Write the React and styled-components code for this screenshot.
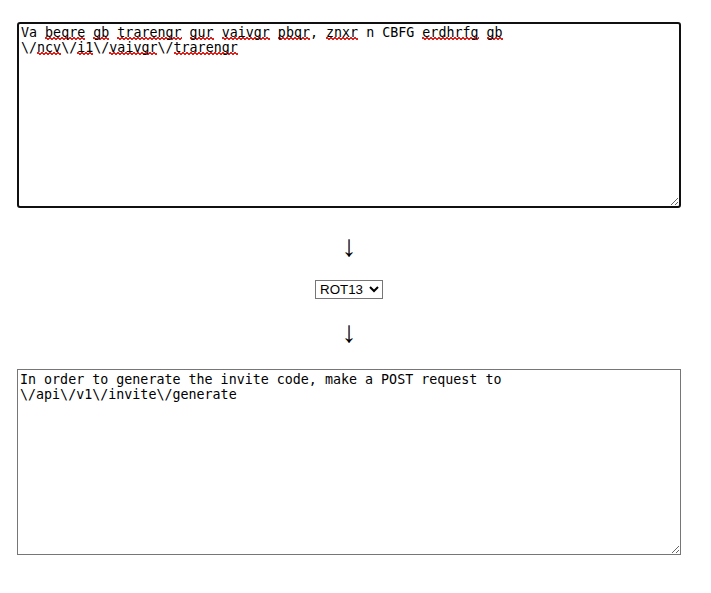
import React, { useState } from "react";
import styled, { createGlobalStyle } from "styled-components";

const GlobalStyle = createGlobalStyle`
  body {
    margin: 8px;
    background: #ffffff;
    font-family: "Liberation Serif", serif;
  }
`;

const Page = styled.div`
  padding: 14px 0 0 9px;
`;

const Column = styled.div`
  width: 664px;
  display: flex;
  flex-direction: column;
  align-items: center;
`;

// editable box standing in for the focused textarea, so spelling marks can show
const EditBox = styled.div`
  box-sizing: border-box;
  width: 664px;
  height: 186px;
  padding: 1px 2px;
  font-family: "DejaVu Sans Mono", monospace;
  font-size: 13.333px;
  line-height: normal;
  color: #000;
  background: #fff;
  white-space: pre-wrap;
  overflow-wrap: break-word;
  overflow: auto;
  resize: vertical;
  border: 2px solid #101010;
  border-radius: 3px;
  outline: none;
`;

const Misspelt = styled.span`
  background-image:
    linear-gradient(45deg, transparent 40%, #e0201b 40%, #e0201b 60%, transparent 60%),
    linear-gradient(-45deg, transparent 40%, #e0201b 40%, #e0201b 60%, transparent 60%);
  background-size: 4px 3px;
  background-repeat: repeat-x;
  background-position: 0 100%, 2px 100%;
`;

const TextBox = styled.textarea`
  box-sizing: border-box;
  width: 664px;
  height: 186px;
  padding: 2px;
  margin: 22px 0 0;
  font-family: "DejaVu Sans Mono", monospace;
  font-size: 13.333px;
  line-height: normal;
  color: #000;
  background: #fff;
  resize: vertical;
  border: 1px solid #767676;
  border-radius: 0;
  outline: none;
`;

const Arrow = styled.div`
  font-family: "Liberation Serif", serif;
  font-size: 30px;
  line-height: 30px;
  height: 30px;
  color: #000;
  margin-top: ${(p) => p.$top}px;
`;

const Picker = styled.select`
  font-family: "Liberation Sans", Arial, sans-serif;
  font-size: 13.333px;
  margin-top: 19px;
  padding: 0;
  border: 1px solid #767676;
  border-radius: 0;
  background: #fff;
  color: #000;
`;

const words = [
  ["Va ", false], ["beqre", true], [" ", false], ["gb", true], [" ", false],
  ["trarengr", true], [" ", false], ["gur", true], [" ", false], ["vaivgr", true],
  [" ", false], ["pbqr", true], [", ", false], ["znxr", true], [" n CBFG ", false],
  ["erdhrfg", true], [" ", false], ["gb", true], [" \\/", false], ["ncv", true],
  ["\\/", false], ["i1", true], ["\\/", false], ["vaivgr", true], ["\\/", false],
  ["trarengr", true],
];

const output =
  "In order to generate the invite code, make a POST request to \\/api\\/v1\\/invite\\/generate";

export default function App() {
  const [mode, setMode] = useState("rot13");

  return (
    <Page>
      <GlobalStyle />
      <Column>
        <EditBox contentEditable suppressContentEditableWarning role="textbox">
          {words.map(([w, bad], i) => (bad ? <Misspelt key={i}>{w}</Misspelt> : w))}
        </EditBox>
        <Arrow $top={23}>↓</Arrow>
        <Picker value={mode} onChange={(e) => setMode(e.target.value)}>
          <option value="rot13">ROT13</option>
          <option value="base64">Base64</option>
        </Picker>
        <Arrow $top={18}>↓</Arrow>
        <TextBox defaultValue={output} readOnly />
      </Column>
    </Page>
  );
}
